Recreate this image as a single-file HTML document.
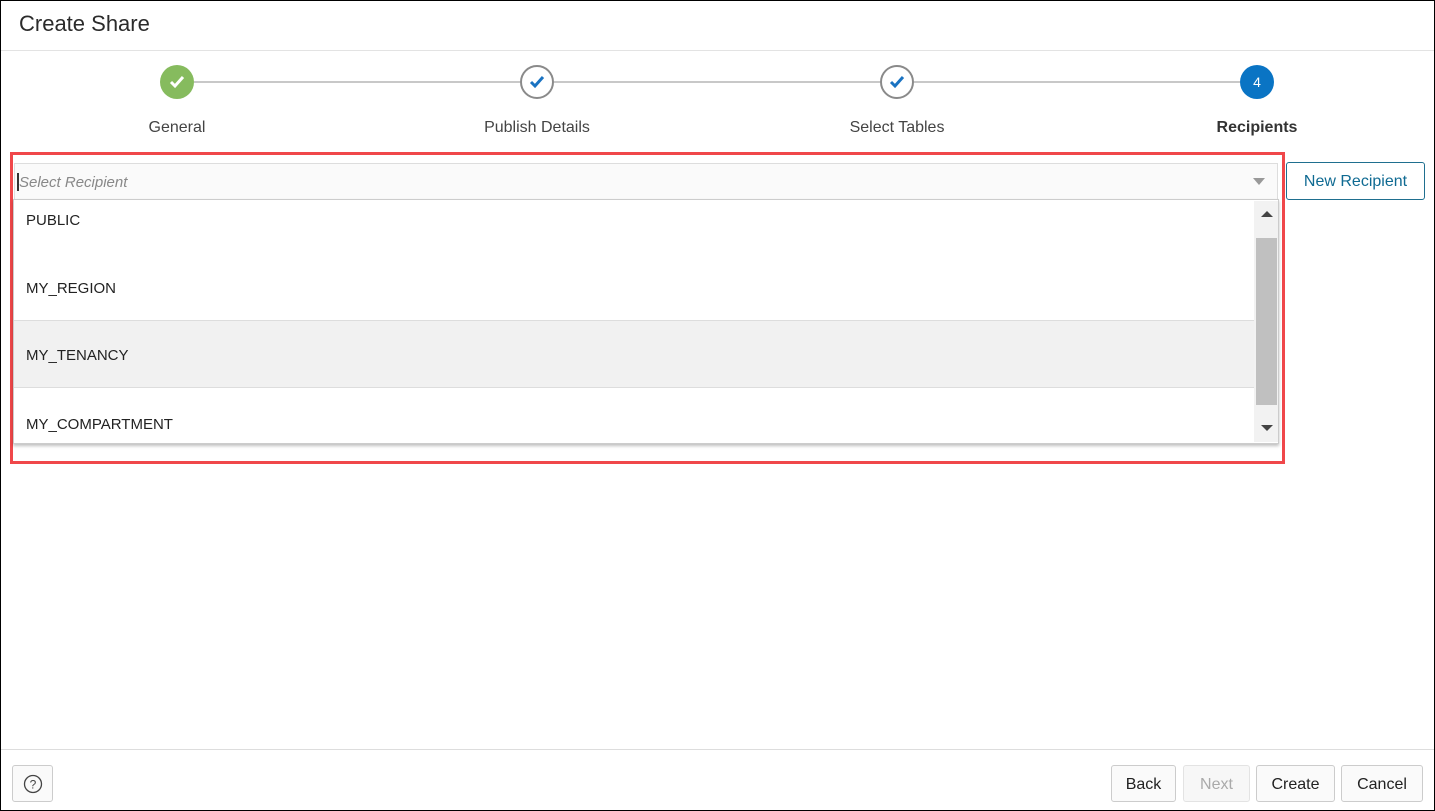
<!DOCTYPE html>
<html><head><style>
*{box-sizing:border-box;margin:0;padding:0}
body{width:1435px;height:811px;background:#fff;font-family:"Liberation Sans",sans-serif;color:#333;position:relative;overflow:hidden}
.frame{position:absolute;left:0;top:0;width:1435px;height:811px;border:1px solid #000}
.abs{position:absolute}
.title{left:19px;top:11px;font-size:22px;color:#2b2b2b}
.hl{left:1px;right:1px;height:1px;background:#e3e3e3}
.line{top:81px;height:2px;background:#c8c8c8}
.circ{width:34px;height:34px;border-radius:50%;top:65px;display:flex;align-items:center;justify-content:center}
.lbl{top:119px;font-size:16px;width:200px;text-align:center;color:#444}
.item{left:14px;width:1240px;height:68px;padding-left:12px;display:flex;align-items:center;font-size:15px;color:#222}
.btn{top:765px;height:37px;border:1px solid #ccc;border-radius:3px;background:#fafafa;font-size:16px;display:flex;align-items:center;justify-content:center;color:#222;padding-top:2px}
</style></head><body>
<div class="frame"></div>
<div class="abs title">Create Share</div>
<div class="abs hl" style="top:50px"></div>
<div class="abs line" style="left:194px;width:326px"></div>
<div class="abs line" style="left:554px;width:326px"></div>
<div class="abs line" style="left:914px;width:326px"></div>
<div class="abs circ" style="left:160px;background:#86bb5e"><svg width="16" height="14"><path d="M2 7 L6 11 L14 2" stroke="#fff" stroke-width="3" fill="none"/></svg></div>
<div class="abs circ" style="left:520px;border:2px solid #8a8a8a;background:#fff"><svg width="16" height="14"><path d="M2 7 L6 11 L14 2" stroke="#1a73c2" stroke-width="3" fill="none"/></svg></div>
<div class="abs circ" style="left:880px;border:2px solid #8a8a8a;background:#fff"><svg width="16" height="14"><path d="M2 7 L6 11 L14 2" stroke="#1a73c2" stroke-width="3" fill="none"/></svg></div>
<div class="abs circ" style="left:1240px;background:#0a74c4;color:#fff;font-size:14px">4</div>
<div class="abs lbl" style="left:77px">General</div>
<div class="abs lbl" style="left:437px">Publish Details</div>
<div class="abs lbl" style="left:797px">Select Tables</div>
<div class="abs lbl" style="left:1157px;font-weight:bold;color:#333">Recipients</div>

<div class="abs" style="left:10px;top:152px;width:1275px;height:312px;border:3px solid #f0474a"></div>
<div class="abs" style="left:14px;top:163px;width:1264px;height:37px;border:1px solid #ddd;background:#fafafa"></div>
<div class="abs" style="left:17px;top:173px;width:2px;height:18px;background:#333"></div>
<div class="abs" style="left:19px;top:174px;font-size:15px;font-style:italic;color:#888">Select Recipient</div>
<div class="abs" style="left:1253px;top:178px;width:0;height:0;border-left:6px solid transparent;border-right:6px solid transparent;border-top:7px solid #999"></div>
<div class="abs" style="left:13px;top:199px;width:1266px;height:245px;border:1px solid #ccc;box-shadow:0 2px 3px rgba(0,0,0,.25);background:#fff"></div>
<div class="abs item" style="top:186px">PUBLIC</div>
<div class="abs item" style="top:254px">MY_REGION</div>
<div class="abs item" style="top:320px;background:#f1f1f1;border-top:1px solid #ddd;border-bottom:1px solid #ddd;padding-top:2px">MY_TENANCY</div>
<div class="abs item" style="top:390px">MY_COMPARTMENT</div>
<div class="abs" style="left:1254px;top:201px;width:24px;height:241px;background:#f2f2f2"></div>
<div class="abs" style="left:1256px;top:238px;width:21px;height:167px;background:#c0c0c0"></div>
<div class="abs" style="left:1261px;top:211px;border-left:6px solid transparent;border-right:6px solid transparent;border-bottom:6px solid #444"></div>
<div class="abs" style="left:1261px;top:425px;border-left:6px solid transparent;border-right:6px solid transparent;border-top:6px solid #444"></div>

<div class="abs" style="left:1286px;top:162px;width:139px;height:38px;border:1px solid #1f6f8f;border-radius:3px;color:#0f6a92;font-size:16px;display:flex;align-items:center;justify-content:center;padding-top:2px">New Recipient</div>

<div class="abs hl" style="top:749px;background:#ddd"></div>
<div class="abs btn" style="left:12px;width:41px;padding-top:0"><svg width="20" height="20"><circle cx="10" cy="10" r="8.5" stroke="#444" stroke-width="1.3" fill="none"/><text x="10" y="14.5" font-size="12" text-anchor="middle" fill="#444" font-family="Liberation Sans">?</text></svg></div>
<div class="abs btn" style="left:1111px;width:65px">Back</div>
<div class="abs btn" style="left:1183px;width:67px;color:#aaa;border-color:#e3e3e3;background:#f7f7f7">Next</div>
<div class="abs btn" style="left:1256px;width:79px">Create</div>
<div class="abs btn" style="left:1341px;width:82px">Cancel</div>
</body></html>
